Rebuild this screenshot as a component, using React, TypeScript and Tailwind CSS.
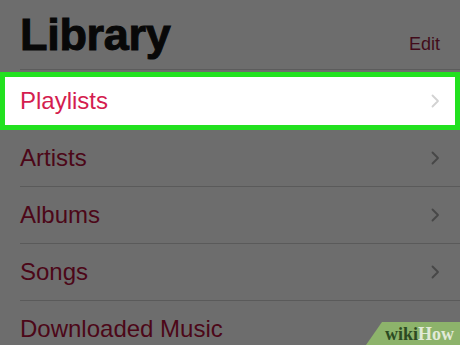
import React from "react";

function Chevron({ color }: { color: string }) {
  return (
    <svg width="10" height="16" viewBox="0 0 10 16" fill="none">
      <polyline points="2.5,2.5 8,8 2.5,13.5" stroke={color} strokeWidth="1.8" strokeLinecap="round" strokeLinejoin="round" />
    </svg>
  );
}

const rows = ["Artists", "Albums", "Songs", "Downloaded Music"];

export default function App() {
  return (
    <div className="relative w-[460px] h-[345px] overflow-hidden bg-[#6d6d6d]" style={{ fontFamily: '"Liberation Sans", Arial, sans-serif' }}>
      <div className="h-[69px] flex items-baseline justify-between pt-[12px] pl-[20px] pr-[20px]">
        <span className="text-[45px] leading-[45px] font-bold text-[#080808] tracking-[-0.3px] [-webkit-text-stroke:1px_#080808]">Library</span>
        <span className="text-[18px] leading-[18px] text-[#420c1b]">Edit</span>
      </div>
      <div className="h-px ml-[20px] bg-[#5c5c5c]" />
      <div className="mt-[2px] h-[58px] border-[5px] border-[#22e11f] bg-white flex items-center justify-between pl-[15px] pr-[15px]">
        <span className="text-[24px] leading-[28px] text-[#d41d4f]">Playlists</span>
        <Chevron color="#d2d2d2" />
      </div>
      {rows.map((r, i) => (
        <div key={r}>
          <div className="h-[56px] flex items-center justify-between pl-[20px] pr-[20px]">
            <span className="text-[24px] leading-[28px] text-[#4c0718]">{r}</span>
            {i < 3 && <Chevron color="#474747" />}
          </div>
          {i < 3 && <div className="h-px ml-[20px] bg-[#5a5a5a]" />}
        </div>
      ))}
      <div
        className="absolute right-0 bottom-0 w-[94px] h-[23px] bg-[#8db36b] flex items-center justify-end pr-[6px]"
        style={{ clipPath: "polygon(17% 0, 100% 0, 100% 100%, 0 100%)" }}
      >
        <span className="text-[18px] leading-[20px] font-bold" style={{ fontFamily: '"Liberation Serif", "Times New Roman", serif' }}>
          <span className="text-[#2c4a22]">wiki</span>
          <span className="text-[#e2ead8]">How</span>
        </span>
      </div>
    </div>
  );
}
